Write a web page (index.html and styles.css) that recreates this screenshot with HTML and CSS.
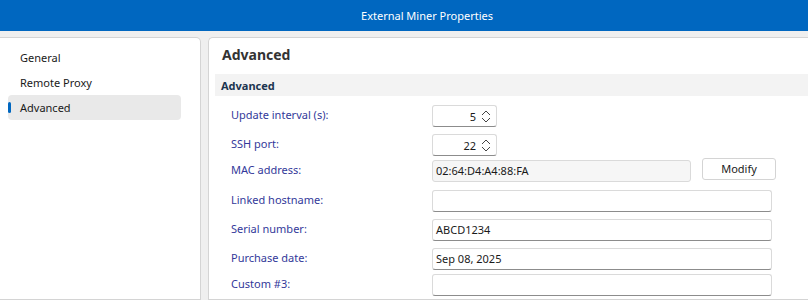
FILE: index.html
```html
<!DOCTYPE html>
<html>
<head>
  <meta charset="UTF-8">
  <title>External Miner Properties</title>
  <link rel="stylesheet" href="styles.css">
</head>
<body>
<div class="titlebar">External Miner Properties</div>
<div class="main">
  <div class="sidebar">
    <div class="nav-item">General</div>
    <div class="nav-item">Remote Proxy</div>
    <div class="nav-item on">Advanced</div>
  </div>
  <div class="content">
    <div class="heading">Advanced</div>
    <div class="section">Advanced</div>
    <div class="form">
      <label>Update interval (s):</label>
      <div class="spin"><span>5</span><svg width="10" height="13" viewBox="0 0 10 13"><polyline points="1,5 5,1 9,5" /><polyline points="1,8 5,12 9,8" /></svg></div>

      <label>SSH port:</label>
      <div class="spin"><span>22</span><svg width="10" height="13" viewBox="0 0 10 13"><polyline points="1,5 5,1 9,5" /><polyline points="1,8 5,12 9,8" /></svg></div>

      <label>MAC address:</label>
      <div class="mac-row">
        <div class="field readonly">02:64:D4:A4:88:FA</div>
        <div class="btn">Modify</div>
      </div>

      <label>Linked hostname:</label>
      <div class="field wide"></div>

      <label>Serial number:</label>
      <div class="field wide">ABCD1234</div>

      <label>Purchase date:</label>
      <div class="field wide">Sep 08, 2025</div>

      <label>Custom #3:</label>
      <div class="field wide"></div>
    </div>
  </div>
</div>
</body>
</html>
```

FILE: styles.css
```css
*{margin:0;padding:0;box-sizing:border-box;}
body{width:808px;height:300px;overflow:hidden;background:#efefef;font-family:"Noto Sans","Open Sans",sans-serif;font-size:11px;color:#1a1a1a;}
.titlebar{height:31px;line-height:31px;background:#0067c0;color:#fff;text-align:center;padding-left:46px;}
.main{display:flex;gap:7px;padding-top:6px;height:269px;}
.sidebar{width:201px;background:#fff;border:1px solid #d4d4d4;border-left:none;border-radius:0 5px 0 0;padding:7px 0 0 8px;}
.nav-item{position:relative;width:173px;height:25px;line-height:25px;padding-left:12px;border-radius:4px;}
.nav-item.on{background:#e9e9e9;}
.nav-item.on::before{content:"";position:absolute;left:0;top:7px;width:3px;height:11px;border-radius:2px;background:#0067c0;}
.content{flex:1;background:#fff;border:1px solid #d4d4d4;border-right:none;border-radius:5px 0 0 0;padding:6px 0 0 6px;}
.heading{font-size:14px;font-weight:bold;color:#333;padding-left:7px;height:30px;line-height:21px;}
.section{background:#f3f3f3;height:22px;line-height:23px;padding-left:6px;font-weight:bold;color:#1c3550;}
.form{display:grid;grid-template-columns:201px 1fr;grid-template-rows:29px 26px 30px 29px 29px 26px 22px;padding:9px 0 0 16px;align-items:start;}
.form label{color:#33399a;line-height:19px;}
.spin{width:65px;height:22px;border:1px solid #dadada;border-bottom-color:#8c8c8c;border-radius:3px;display:flex;align-items:center;justify-content:flex-end;padding-right:5px;gap:5px;}
.spin svg{fill:none;stroke:#444;stroke-width:1;}
.field{height:22px;line-height:20px;border:1px solid #dadada;border-bottom-color:#8c8c8c;border-radius:3px;padding-left:3px;background:#fff;}
.field.wide{width:340px;}
.field.readonly{width:259px;background:#f6f6f6;border-bottom-color:#dadada;}
.mac-row{display:flex;gap:11px;}
.btn{width:74px;height:22px;line-height:20px;margin-top:-2px;border:1px solid #d4d4d4;border-radius:3px;text-align:center;background:#fff;}
```
